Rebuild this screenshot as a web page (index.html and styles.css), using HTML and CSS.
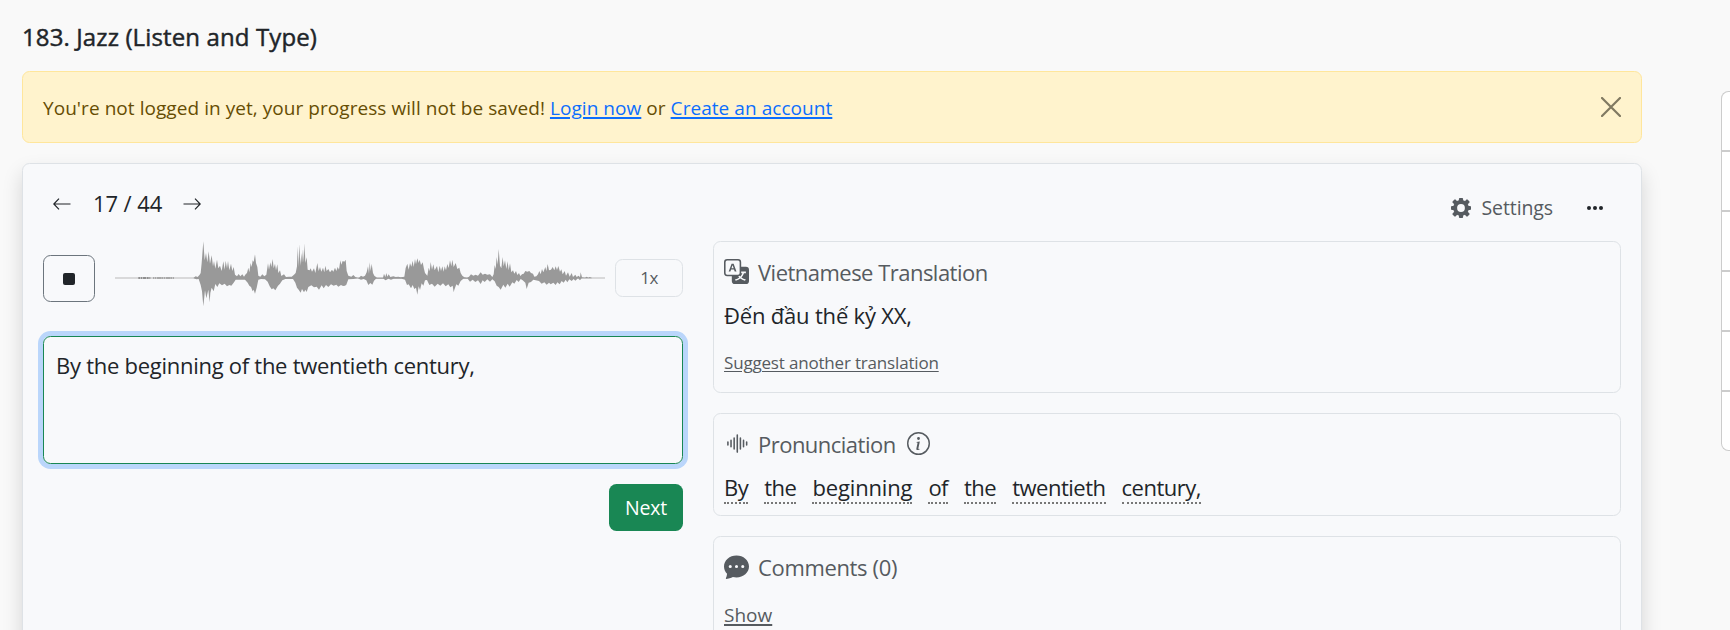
FILE: index.html
```html
<!DOCTYPE html>
<html lang="en">
<head>
<meta charset="utf-8">
<title>183. Jazz (Listen and Type)</title>
<link rel="stylesheet" href="styles.css">
</head>
<body>
<div class="page">
  <main class="main">
    <h1 class="title">183. Jazz (Listen and Type)</h1>
    <div class="alert">
      <p class="alert-text">You're not logged in yet, your progress will not be saved! <a href="#">Login now</a> or <a href="#">Create an account</a></p>
      <button class="close" aria-label="Close"><svg viewBox="0 0 20 20" width="20" height="20"><path d="M1 1l18 18M19 1L1 19" stroke="currentColor" stroke-width="2.2" stroke-linecap="round"/></svg></button>
    </div>
    <section class="card">
      <header class="toolbar">
        <div class="pager">
          <svg class="arrow" viewBox="0 0 18 12" width="18" height="12"><path d="M17.5 6H1M6 .7L.8 6 6 11.3"/></svg>
          <span class="count">17 / 44</span>
          <svg class="arrow" viewBox="0 0 18 12" width="18" height="12"><path d="M.5 6H17M12 .7L17.2 6 12 11.3"/></svg>
        </div>
        <div class="actions">
          <svg class="gear" viewBox="0 0 20 20" width="20" height="20"><g fill="currentColor"><rect x="7.9" y="0" width="4.2" height="20" rx="1"/><rect x="0" y="7.9" width="20" height="4.2" rx="1"/><rect x="7.9" y="-.6" width="4.2" height="21.2" rx="1" transform="rotate(45 10 10)"/><rect x="7.9" y="-.6" width="4.2" height="21.2" rx="1" transform="rotate(-45 10 10)"/><circle cx="10" cy="10" r="7.9"/></g><circle cx="10" cy="10" r="3.9" fill="#f8f9fb"/></svg>
          <span class="settings">Settings</span>
          <svg class="dots" viewBox="0 0 18 6" width="18" height="6"><circle cx="3" cy="3" r="2"/><circle cx="9" cy="3" r="2"/><circle cx="15" cy="3" r="2"/></svg>
        </div>
      </header>
      <div class="columns">
        <div class="left">
          <div class="player">
            <button class="stop" aria-label="Stop"><span class="stop-icon"></span></button>
            <svg class="wave" viewBox="0 0 1470 210" width="490" height="70">
              <path d="M0 105H1470" stroke="#aaa" stroke-width="2.4"/>
              <path d="M70 105H106" stroke="#777" stroke-width="5" stroke-dasharray="6 2 3 2 10 2"/>
              <path d="M114 105H177" stroke="#999" stroke-width="4.5" stroke-dasharray="3 2 5 2 14 1"/>
              <path fill="#999" d="M236 104L242 100 248 102 254 95 257 90 260 60 265 -5 269 52 273 30 277 58 281 25 285 62 290 37 294 70 297 54 301 77 306 50 310 76 315 68 320 84 325 55 329 80 332 53 336 76 339 54 343 82 348 62 352 84 356 72 360 95 366 100 371 93 376 100 382 94 387 101 392 94 396 90 400 74 403 88 407 60 410 72 413 52 416 57 420 34 423 60 427 72 430 98 436 101 442 94 448 100 454 95 459 61 462 80 466 58 469 72 473 48 476 76 480 62 483 82 487 64 490 90 495 82 499 99 507 94 513 102 522 101 530 101 537 95 542 90 546 70 548 10 550 72 553 4 556 68 559 30 561 60 564 18 566 58 569 1 571 60 575 43 578 80 584 82 587 76 591 86 597 76 601 90 607 60 611 84 615 72 619 86 624 74 628 88 631 68 635 84 640 78 645 88 651 80 655 86 660 74 664 84 668 72 672 80 676 52 679 65 683 54 688 56 692 50 695 84 700 98 709 101 715 96 721 102 728 104 732 104 738 98 744 101 750 98 755 88 759 70 762 92 764 58 767 84 770 62 774 90 778 98 786 104 804 104 807 92 811 102 814 90 817 101 821 94 826 102 835 100 842 102 850 101 857 103 868 101 872 75 877 62 881 80 885 60 889 71 893 53 896 72 900 48 903 64 907 46 911 60 914 50 918 66 923 58 927 78 930 90 937 98 941 74 944 85 947 57 951 80 955 64 959 82 966 69 970 88 974 68 978 84 982 70 986 86 989 70 993 82 997 63 1001 75 1005 52 1009 70 1012 50 1016 72 1022 60 1027 78 1033 74 1037 90 1042 98 1048 103 1056 104 1062 101 1068 94 1075 98 1082 95 1089 98 1097 88 1103 95 1110 92 1117 95 1125 94 1132 102 1136 94 1139 66 1142 78 1145 42 1148 65 1151 18 1155 68 1159 76 1163 42 1166 70 1170 52 1174 78 1178 55 1181 82 1185 61 1189 88 1194 82 1198 92 1203 84 1207 96 1212 90 1216 99 1221 94 1226 92 1231 84 1237 86 1243 84 1248 90 1254 92 1258 101 1264 100 1269 94 1273 84 1277 94 1281 78 1285 88 1291 72 1294 84 1298 63 1302 82 1308 80 1313 72 1318 82 1322 70 1326 81 1330 69 1335 86 1339 79 1343 94 1349 84 1353 98 1359 88 1364 101 1370 90 1374 102 1381 95 1385 102 1391 98 1395 103 1397 88 1401 103 1410 104 1415 101 1420 104 1424 102 1430 104V106H1400L1395 112 1389 106 1381 113 1376 108 1370 114 1363 109 1357 118 1352 110 1346 119 1340 114 1334 124 1327 118 1322 126 1315 119 1307 124 1302 119 1295 125 1288 118 1280 122 1272 114 1262 112 1255 110 1248 117 1241 119 1235 138 1231 119 1223 112 1217 108 1211 117 1205 111 1198 122 1192 118 1184 131 1178 122 1171 134 1165 125 1157 140 1151 132 1145 128 1139 115 1132 109 1125 116 1117 109 1109 117 1103 112 1097 123 1089 112 1081 117 1073 110 1065 116 1058 107 1045 107 1037 114 1030 128 1024 124 1018 140 1016 148 1013 128 1006 133 1000 124 992 130 984 121 976 128 968 122 959 131 951 122 943 126 936 111 930 112 925 128 920 121 915 141 911 130 907 155 903 134 898 138 893 126 888 136 881 124 876 126 870 110 860 107H836L828 110 820 107 812 112 805 107 783 107 777 113 772 125 766 120 760 126 754 112 746 108 738 110 728 106 715 108 700 109 694 125 690 128 684 129 678 126 670 131 664 125 656 128 648 124 640 132 633 126 626 136 620 127 612 140 605 131 597 133 589 127 580 132 575 147 571 140 567 148 561 138 557 149 551 140 546 134 541 119 534 108H511L502 112 495 122 489 128 481 142 475 136 470 139 464 130 458 116 450 109 438 108 430 110 425 134 420 152 416 140 413 145 408 132 403 128 398 119 390 110H362L356 119 349 128 343 126 336 130 329 122 321 127 313 121 307 132 301 123 296 145 290 134 286 150 284 178 280 140 274 166 270 142 265 190 261 145 257 126 251 108 244 109 236 106Z"/>
            </svg>
            <button class="speed"><span>1x</span></button>
          </div>
          <div class="answer">By the beginning of the twentieth century,</div>
          <button class="next"><span>Next</span></button>
        </div>
        <div class="right">
          <article class="panel panel-translation">
            <h2 class="panel-head">
              <svg class="ico" viewBox="0 0 16 16" width="25" height="25"><path d="M4.545 6.714 4.11 8H3l1.862-5h1.284L8 8H6.833l-.435-1.286H4.545zm1.634-.736L5.5 3.956h-.049l-.679 2.022H6.18z"/><path d="M0 2a2 2 0 0 1 2-2h7a2 2 0 0 1 2 2v3h3a2 2 0 0 1 2 2v7a2 2 0 0 1-2 2H7a2 2 0 0 1-2-2v-3H2a2 2 0 0 1-2-2V2zm2-1a1 1 0 0 0-1 1v7a1 1 0 0 0 1 1h7a1 1 0 0 0 1-1V2a1 1 0 0 0-1-1H2zm7.138 9.995c.193.301.402.583.63.846-.748.575-1.673 1.001-2.768 1.292.178.217.451.635.555.867 1.125-.359 2.08-.844 2.886-1.494.777.665 1.739 1.165 2.93 1.472.133-.254.414-.673.629-.89-1.125-.253-2.057-.694-2.82-1.284.681-.747 1.222-1.651 1.621-2.757H14V8h-3v1.047h.765c-.318.844-.74 1.546-1.272 2.13a6.066 6.066 0 0 1-.415-.492 1.988 1.988 0 0 1-.94.31z"/></svg>
              <span class="tight">Vietnamese Translation</span>
            </h2>
            <p class="translation">Đến đầu thế kỷ XX,</p>
            <a class="suggest" href="#">Suggest another translation</a>
          </article>
          <article class="panel panel-pron">
            <h2 class="panel-head">
              <svg class="ico" viewBox="0 0 16 16" width="25" height="25"><path d="M8.5 2a.5.5 0 0 1 .5.5v11a.5.5 0 0 1-1 0v-11a.5.5 0 0 1 .5-.5zm-2 2a.5.5 0 0 1 .5.5v7a.5.5 0 0 1-1 0v-7a.5.5 0 0 1 .5-.5zm4 0a.5.5 0 0 1 .5.5v7a.5.5 0 0 1-1 0v-7a.5.5 0 0 1 .5-.5zm-6 1.500a.5.5 0 0 1 .5.5v4a.5.5 0 0 1-1 0V6a.5.5 0 0 1 .5-.5zm8 0a.5.5 0 0 1 .5.5v4a.5.5 0 0 1-1 0V6a.5.5 0 0 1 .5-.5zm-10 1a.5.5 0 0 1 .5.5v2a.5.5 0 0 1-1 0V7a.5.5 0 0 1 .5-.5zm12 0a.5.5 0 0 1 .5.5v2a.5.5 0 0 1-1 0V7a.5.5 0 0 1 .5-.5z"/></svg>
              <span class="tight">Pronunciation</span>
              <svg class="ico info" viewBox="0 0 16 16" width="23" height="23"><path d="M8 15A7 7 0 1 1 8 1a7 7 0 0 1 0 14zm0 1A8 8 0 1 0 8 0a8 8 0 0 0 0 16z"/><path d="m8.930 6.588-2.290.287-.082.380.450.083c.294.070.352.176.288.469l-.738 3.468c-.194.897.105 1.319.808 1.319.545 0 1.178-.252 1.465-.598l.088-.416c-.2.176-.492.246-.686.246-.275 0-.375-.193-.304-.533L8.930 6.588zM9 4.500a1 1 0 1 1-2 0 1 1 0 0 1 2 0z"/></svg>
            </h2>
            <p class="words"><span>By</span><span>the</span><span class="long">beginning</span><span>of</span><span>the</span><span>twentieth</span><span>century,</span></p>
          </article>
          <article class="panel panel-comments">
            <h2 class="panel-head">
              <svg class="ico" viewBox="0 0 16 16" width="25" height="25"><path d="M16 8c0 3.866-3.582 7-8 7a9.060 9.060 0 0 1-2.347-.306c-.584.296-1.925.864-4.181 1.234-.2.032-.352-.176-.273-.362.354-.836.674-1.950.770-2.966C.744 11.370 0 9.760 0 8c0-3.866 3.582-7 8-7s8 3.134 8 7zM5 8a1 1 0 1 0-2 0 1 1 0 0 0 2 0zm4 0a1 1 0 1 0-2 0 1 1 0 0 0 2 0zm3 1a1 1 0 1 0 0-2 1 1 0 0 0 0 2z"/></svg>
              <span class="comments">Comments (0)</span>
            </h2>
            <a class="show" href="#">Show</a>
          </article>
        </div>
      </div>
    </section>
  </main>
  <aside class="side"><div></div><div></div><div></div><div></div><div></div><div></div></aside>
</div>
</body>
</html>
```
FILE: styles.css
```css
* { box-sizing: border-box; margin: 0; padding: 0; }
body { background: #f9f9f9; color: #212529; font-family: "Open Sans", "Noto Sans", sans-serif; font-size: 20px; line-height: 30px; overflow: hidden; height: 630px; }
button { font: inherit; background: none; border: 0; color: inherit; }
a { color: inherit; text-underline-offset: 2px; }
svg { display: block; flex: none; }
.page { display: flex; justify-content: space-between; height: 630px; overflow: hidden; padding-left: 22px; }
.main { width: 1620px; flex: none; }
.title { font-size: 24px; font-weight: 500; letter-spacing: .12px; -webkit-text-stroke: .45px #212529; line-height: 30px; padding-top: 22px; height: 71px; white-space: nowrap; }
.alert { display: flex; justify-content: space-between; align-items: center; height: 72px; padding: 0 20px; background: #fff3cd; border: 1px solid #ffe69c; border-radius: 7.5px; color: #664d03; }
.alert-text { font-size: 19px; letter-spacing: .056px; padding-top: 2px; white-space: nowrap; }
.alert a { color: #0d6efd; text-decoration-thickness: 2px; }
.close { color: #807961; }
.card { margin-top: 20px; height: 600px; padding: 0 20px; background: #f8f9fb; border: 1px solid #dee2e6; border-radius: 7.5px; box-shadow: 0 10px 20px rgba(0,0,0,.15); }
.toolbar { display: flex; justify-content: space-between; height: 77px; }
.pager { display: flex; align-items: center; height: 80px; padding-left: 10px; }
.count { font-size: 22px; letter-spacing: -.1px; margin: 0 21px 0 22px; padding-bottom: 2px; }
.arrow { fill: none; stroke: #212529; stroke-width: 1.2; }
.actions { display: flex; align-items: center; height: 88px; padding-right: 17px; color: #565b60; }
.settings { font-size: 19.5px; letter-spacing: -.1px; margin: 0 33px 0 10px; }
.dots { fill: #212529; }
.columns { display: flex; gap: 30px; }
.left { width: 640px; display: flex; flex-direction: column; }
.player { display: flex; align-items: center; height: 75px; }
.stop { width: 52px; height: 47px; border: 1px solid #6c757d; border-radius: 7.5px; display: flex; align-items: center; justify-content: center; margin-right: 20px; }
.stop-icon { width: 12px; height: 12px; border-radius: 2px; background: #212529; }
.wave { overflow: visible; margin-top: -1px; }
.speed { width: 68px; height: 38px; margin: -1px 0 0 10px; border: 1px solid #dee2e6; border-radius: 7.5px; font-size: 17px; letter-spacing: -.5px; color: #565b60; }
.answer { height: 128px; margin-top: 20px; border: 1px solid #198754; border-radius: 7.5px; box-shadow: 0 0 0 5px #bad6fb; padding: 13px 12px; font-size: 22px; letter-spacing: -.27px; white-space: nowrap; }
.next { align-self: flex-end; width: 74px; height: 47px; margin-top: 20px; border-radius: 7.5px; background: #198754; color: #fff; font-size: 19.5px; letter-spacing: -.2px; }
.right { width: 908px; display: flex; flex-direction: column; gap: 20px; }
.panel { border: 1px solid #dee2e6; border-radius: 7.5px; padding: 0 10px; white-space: nowrap; }
.panel-translation { height: 152px; }
.panel-pron { height: 103px; }
.panel-comments { height: 130px; }
.panel-head { display: flex; align-items: center; height: 60px; font-size: 22px; font-weight: 400; color: #565b60; }
.tight { letter-spacing: -.52px; }
.comments { letter-spacing: -.35px; }
.ico { fill: currentColor; margin: -2px 9px 0 0; }
.info { margin: -2px 0 0 11px; }
.translation { font-size: 22px; line-height: 30px; letter-spacing: -.19px; margin-top: -2px; }
.suggest { display: block; margin-top: 18px; font-size: 17px; letter-spacing: -.18px; color: #565b60; }
.words { display: flex; gap: 16px; font-size: 22px; line-height: 30px; letter-spacing: -.5px; margin-top: -1px; }
.words span { border-bottom: 2px dotted #777; height: 31px; line-height: 28px; }
.words .long { letter-spacing: -.15px; }
.show { display: block; margin-top: 3px; font-size: 19px; color: #565b60; text-decoration-thickness: 2px; }
.side { flex: none; width: 9px; height: 360px; margin-top: 91px; background: #fff; border: 1px solid #ccc; border-right: 0; border-radius: 7.5px 0 0 7.5px; }
.side div { height: 60px; border-bottom: 2px solid #ccc; }
.side div:last-child { border: 0; height: 58px; }
```
